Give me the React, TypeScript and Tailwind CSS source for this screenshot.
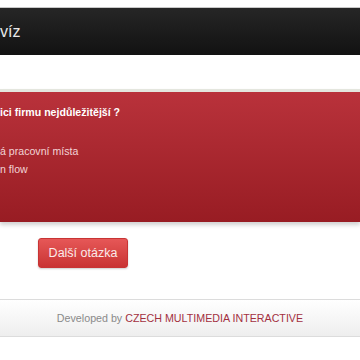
import React from 'react'

const ANSWERS = ['á pracovní místa', 'n flow']

export default function App() {
  return (
    <div className="h-[360px] w-[360px] overflow-hidden bg-white font-['Liberation_Sans',Arial,sans-serif]">
      {/* top bar */}
      <div className="h-[7px] bg-white" />
      <header className="flex h-[48px] items-center border-t border-[#c8c8c8] bg-gradient-to-b from-[#262626] to-[#121212]">
        <span className="text-[16px] leading-none text-[#e8e8e8]">víz</span>
      </header>

      {/* question panel */}
      <div className="mt-[34px] border-t-[3px] border-[#e4e6de] shadow-[0_3px_4px_rgba(0,0,0,0.18)]">
        <div className="h-[130px] bg-gradient-to-b from-[#b9323b] to-[#981c23] pt-[13px]">
          <p className="text-[10.6px] font-bold leading-[14px] text-white">ici firmu nejdůležitější ?</p>
          <ul className="mt-[23px]">
            {ANSWERS.map((a) => (
              <li key={a} className="text-[10.6px] leading-[18px] text-[#f2d4d6]">
                {a}
              </li>
            ))}
          </ul>
        </div>
      </div>

      <div className="pl-[38px] pt-[16px]">
        <button className="flex h-[30px] w-[90px] items-center justify-center rounded-[3px] border border-[#c83434] bg-gradient-to-b from-[#e65757] to-[#c93333] text-[12.5px] text-[#fbeaea] shadow-[0_1px_2px_rgba(0,0,0,0.2)]">
          Další otázka
        </button>
      </div>

      {/* footer */}
      <footer className="mt-[31px] flex h-[38px] items-center justify-center border-y border-[#dcdcdc] bg-gradient-to-b from-white to-[#eeeeee] text-[10.7px]">
        <span className="text-[#8a8a8a]">Developed by&nbsp;</span>
        <span className="text-[#a3303f]">CZECH MULTIMEDIA INTERACTIVE</span>
      </footer>
    </div>
  )
}
